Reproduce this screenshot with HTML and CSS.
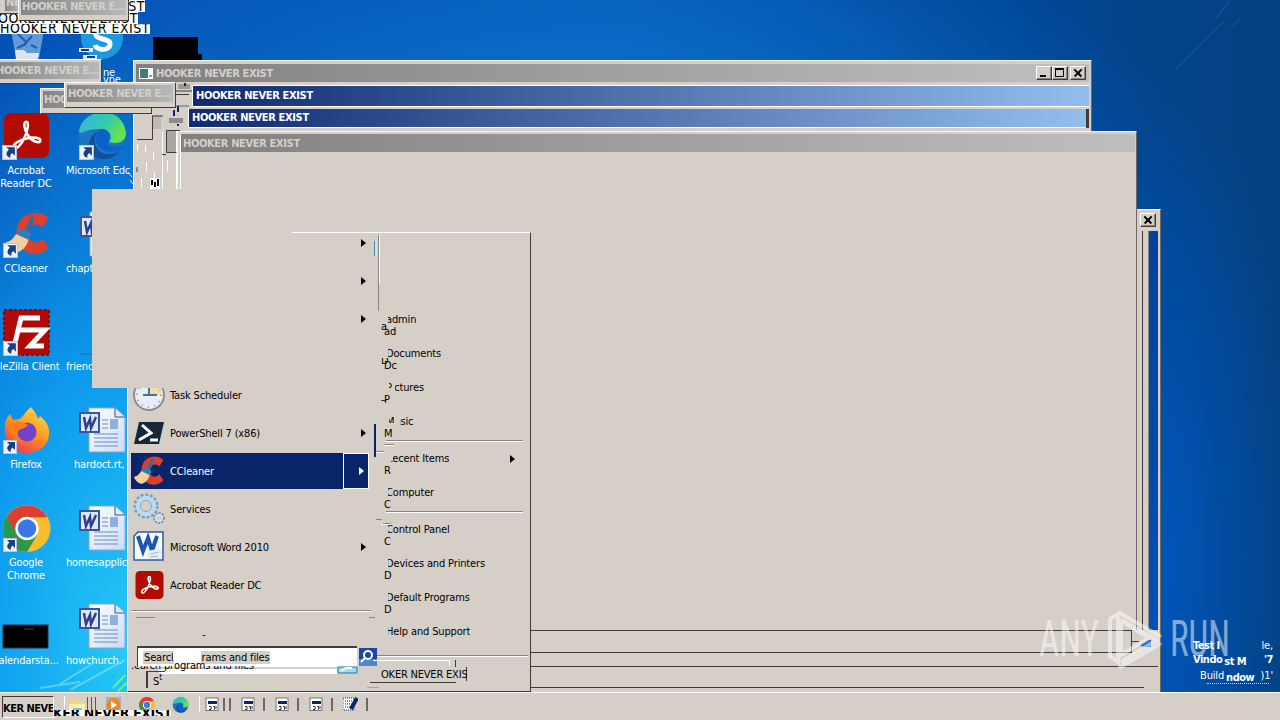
FILE: index.html
```html
<!DOCTYPE html>
<html lang="en">
<head>
  <meta charset="UTF-8">
  <title>Desktop</title>
  <link rel="stylesheet" href="styles.css">
</head>
<body>
<svg class="defs" width="0" height="0">
  <defs>
    <linearGradient id="edge1" x1="0" y1="0" x2="1" y2="0.4"><stop offset="0" stop-color="#35b6dc"/><stop offset="0.6" stop-color="#33c9b0"/><stop offset="1" stop-color="#66e152"/></linearGradient>
    <linearGradient id="fox" x1="0.8" y1="0" x2="0.2" y2="1"><stop offset="0" stop-color="#ffe043"/><stop offset="0.5" stop-color="#ff9120"/><stop offset="1" stop-color="#f0305c"/></linearGradient>
    <linearGradient id="page" x1="0" y1="0" x2="1" y2="1"><stop offset="0" stop-color="#fff"/><stop offset="1" stop-color="#c9dcf8"/></linearGradient>
  </defs>
  <symbol id="shortcut" viewBox="0 0 14 14">
    <rect x="0.5" y="0.5" width="13" height="13" fill="#eef3fa" stroke="#b8c4d8"/>
    <path d="M4 2h8v8L9.500 7.500C7.500 9 7.500 10.500 8 12 3.500 11 3 7 6.500 4.500z" fill="#173f85"/>
  </symbol>
  <symbol id="acrobat" viewBox="0 0 46 46">
    <rect width="46" height="46" rx="7" fill="#b30b00"/>
    <path d="M23 9c-4 0-2 8 1 13 4 7 11 9 13 7 2-4-8-5-14-3-7 2-14 5-13 9 2 4 8-3 11-10 3-6 5-16 2-16z" fill="none" stroke="#fff" stroke-width="2.600"/>
  </symbol>
  <symbol id="ccleaner" viewBox="0 0 46 46">
    <path d="M45 6C34-4 15 1 12 17c-3 14 5 26 17 27 8 0 13-3 16-7l-6-9c-5 6-14 5-15-4-2-9 8-15 15-8z" fill="#d9412d"/>
    <path d="M27 4l3 1-4 15-5-2z" fill="#2b6cb0"/>
    <path d="M14 19c5-3 12 0 13 6l-4 5-12-7z" fill="#2f7fb5"/>
    <path d="M11 23l13 6c-2 8-7 12-13 14C5 41 1 37 0 32c5-1 8-4 11-9z" fill="#f2cf9c"/>
  </symbol>
  <symbol id="chrome" viewBox="0 0 46 46">
    <circle cx="23" cy="23" r="23" fill="#f9bd2b"/>
    <path d="M3 12A23 23 0 0 1 43 12H23L13 29z" fill="#dc3e31"/>
    <path d="M3 11.500A23 23 0 0 0 23 46L33 29 13 28z" fill="#2f9648"/>
    <circle cx="23" cy="23" r="11.500" fill="#fff"/><circle cx="23" cy="23" r="9" fill="#3b78e7"/>
  </symbol>
  <symbol id="edge" viewBox="0 0 48 48">
    <circle cx="24" cy="24" r="23.500" fill="#1b74c4"/>
    <path d="M1 20C4-5 45-8 48 21c0 8-7 12-17 9 4-5 1-13-8-13C11 16 3 22 1 20z" fill="url(#edge1)"/>
    <path d="M19 20c-6 10 1 23 12 22 5 0 9-1 12-5-5 9-15 12-24 9C8 42 9 24 19 20z" fill="#154f98"/>
    <path d="M24 17c-8 2-9 14 0 20 6 4 14 3 19 0 3-2 1-4-2-3-8 2-13-1-11-4 4-6 0-13-6-13z" fill="#0a62c8"/>
  </symbol>
  <symbol id="firefox" viewBox="0 0 46 46">
    <path d="M1 24C0 17 2 11 6 7l3 6 7-1C21 7 23 3 27 0c3 4 5 6 7 12l2-3c6 5 10 11 9 19-1 11-11 18-22 18S2 38 1 24z" fill="url(#fox)"/>
    <circle cx="23" cy="25" r="9.500" fill="#7541c8"/>
    <path d="M6 17c6-3 12-3 18 1-3 4-7 3-10 6-3 6 2 10 8 10-12 3-18-6-16-17z" fill="#ff7c1d"/>
  </symbol>
  <symbol id="wordfile" viewBox="0 0 48 46">
    <path d="M10 1h26l10 9v35H10z" fill="url(#page)" stroke="#8fa5d0"/>
    <path d="M36 1v9h10" fill="#dfe9fb" stroke="#38558f"/>
    <rect x="31" y="12" width="8" height="10" fill="#8fb0dd"/>
    <path d="M23 13h6M23 17h6M23 21h6M15 27h24M15 31h24M15 35h24M15 39h24" stroke="#7487b8"/>
    <rect x="1" y="6" width="19" height="19" fill="#dfe7fa" stroke="#3755a8" stroke-width="2"/>
    <path d="M5 10l2 11 4-9 1 9 5-11" fill="none" stroke="#2d3f8f" stroke-width="2.500"/>
  </symbol>
  <symbol id="arrow" viewBox="0 0 5 8"><path d="M0 0l5 4-5 4z" fill="currentColor"/></symbol>
  <symbol id="app" viewBox="0 0 14 14">
    <rect x="1" y="1" width="12" height="12.500" fill="#fff" stroke="#777"/>
    <rect x="3" y="4" width="9" height="3" fill="#0a246a"/>
    <path d="M4 9.500h2v3H4M8 9.500h1.500v3M11 9v3" fill="none" stroke="#234"/>
  </symbol>
</svg>

<div class="desktop">
  <svg class="rays" width="1280" height="720" fill="none">
    <path d="M40 688l40-6M60 684l35-22M70 690l55-30" stroke="#7fe2fb" stroke-width="2" opacity=".6"/>
    <path d="M113 688l12-13M118 691l10-9" stroke="#6df08a" stroke-width="2"/>
    <path d="M1175 70l50-50M1216 18l14-17M1232 26l8-8" stroke="#4a86c0" opacity=".35"/>
  </svg>

  <div class="icons">
    <div class="icon">
      <svg width="48" height="48"><path d="M9 16h33l-5 28H14z" fill="#7fb4e4" opacity=".75"/><path d="M16 20l8 8M30 22l-8 9M15 34l9-4M29 31l6 3" stroke="#1b5eb0" stroke-width="2"/><path d="M13 36h9l3 3h12l-1 6H14z" fill="#d9e4ec"/></svg>
    </div>
    <div class="icon">
      <svg width="48" height="48"><use href="#acrobat" x="2" y="1" width="45" height="45"/><use href="#shortcut" x="0" y="33" width="15" height="15"/></svg>
      <span>Acrobat<br>Reader DC</span>
    </div>
    <div class="icon">
      <svg width="48" height="48"><use href="#ccleaner" x="3" y="2" width="45" height="44"/><use href="#shortcut" x="1" y="33" width="15" height="15"/></svg>
      <span>CCleaner</span>
    </div>
    <div class="icon">
      <svg width="48" height="48"><rect x="2" y="2" width="45" height="45" fill="#b30808" stroke="#7d0d0d" stroke-width="2" stroke-dasharray="3 2"/><path d="M13 35l6-25h19M17 22h14M25 22h18L28 38h14" fill="none" stroke="#fff" stroke-width="5"/><use href="#shortcut" x="1" y="33" width="15" height="15"/></svg>
      <span>FileZilla Client</span>
    </div>
    <div class="icon">
      <svg width="48" height="48"><use href="#firefox" x="2" y="1" width="46" height="46"/><use href="#shortcut" x="1" y="34" width="14" height="14"/></svg>
      <span>Firefox</span>
    </div>
    <div class="icon">
      <svg width="48" height="48"><use href="#chrome" x="1" y="1" width="48" height="47"/><use href="#shortcut" x="1" y="34" width="14" height="14"/></svg>
      <span>Google<br>Chrome</span>
    </div>
    <div class="icon">
      <svg width="48" height="48"><rect x="1" y="23" width="45" height="23" fill="#000" stroke="#234"/><path d="M22 27h10" stroke="#444"/></svg>
      <span>calendarsta...</span>
    </div>
    <div class="icon">
      <svg width="48" height="48"><circle cx="24" cy="24" r="21" fill="#1a9be0"/><path d="M31 18c-4-5-14-3-13 3 1 5 14 3 14 9 0 7-13 7-15 1" fill="none" stroke="#fff" stroke-width="5"/></svg>
    </div>
    <div class="icon left">
      <svg width="48" height="48"><use href="#edge" x="0" y="0" width="48" height="48"/><use href="#shortcut" x="1" y="33" width="15" height="15"/></svg>
      <span>Microsoft Edc</span>
    </div>
    <div class="icon left">
      <svg width="48" height="48"><use href="#wordfile" x="2" y="1" width="48" height="46"/></svg>
      <span>chapt</span>
    </div>
    <div class="icon left">
      <svg width="48" height="48"><path d="M2 46h20" stroke="#266b9c"/></svg>
      <span>friend</span>
    </div>
    <div class="icon left">
      <svg width="48" height="48"><use href="#wordfile" x="1" y="1" width="48" height="46"/></svg>
      <span class="short">hardoct.rt,</span>
    </div>
    <div class="icon left">
      <svg width="48" height="48"><use href="#wordfile" x="1" y="1" width="48" height="46"/></svg>
      <span>homesapplic</span>
    </div>
    <div class="icon left">
      <svg width="48" height="48"><use href="#wordfile" x="1" y="1" width="48" height="46"/></svg>
      <span>howchurch.</span>
    </div>
  </div>

  <div class="build">
    <p><b>Test I</b><span class="end">le,</span></p>
    <p><b>Vindo</b><b class="drop">st M</b><b class="end">'7</b></p>
    <p><span>Build</span><b class="drop">ndow</b><span class="end">)1'</span></p>
    <div class="dots"></div>
  </div>

  <div class="window back">
    <div class="tools"><button class="btn close"></button></div>
    <div class="gap"></div>
  </div>

  <div class="window main">
    <div class="titlebar">
      <svg width="14" height="11"><rect width="14" height="11" fill="#fff"/><rect x="1" y="1" width="8" height="9" fill="#3f7d78"/><path d="M10 8h3" stroke="#333"/></svg>
      <span>HOOKER NEVER EXIST</span>
      <button class="btn min"></button><button class="btn max"></button><button class="btn close"></button>
    </div>
    <div class="active first">HOOKER NEVER EXIST</div>
    <div class="active second">HOOKER NEVER EXIST</div>
  </div>

  <div class="window front">
    <div class="titlebar">HOOKER NEVER EXIST</div>
  </div>
  <div class="lower">
    <div class="tray"></div>
    <div class="tray two"></div>
    <div class="tray three"></div>
    <svg class="corner" width="28" height="20"><path d="M0 9.500h8" stroke="#413c38"/><path d="M9 13l8-5h3v7h-8z" fill="#1d6cc8"/></svg>
  </div>

  <svg class="debris" width="1280" height="240">
    <path d="M153 37h45v17h4v6h-49z" fill="#000"/>
    <path d="M134 85h57v22h-3v24h-11v58h-43z" fill="#d5cfc8"/>
    <path d="M133.500 85v104M162.500 132v57M176.500 131v58M180.500 134v55M192.500 86v21" stroke="#fff"/>
    <path d="M167 131h9v21h-9z" fill="#aaa7a3"/>
    <path d="M153 115h8v14h-8z" fill="#bdbab5"/>
    <path d="M137 139.500h15.500v-24M180 130.500h-13.500v22h10M162 154.500h4M153 116h10M176 91h16M176 94.500h13" fill="none" stroke="#413c38"/>
    <path d="M178 84h12v5h-12zM172 105h17v2h-17z" fill="#9c9a97"/>
    <path d="M185 83v3" stroke="#222" stroke-width="2"/>
    <path d="M169 118h14v5h-14z" fill="#8d8c8c"/>
    <path d="M174 110v6M178 106v6M178 124v2" stroke="#0a246a" stroke-width="2"/>
    <path d="M145.500 145v7M153.500 152v8M146.500 162v9M167.500 160v12M141.500 178v9M154.500 172v6M137.500 144v7" stroke="#fff"/>
    <path d="M137 167v5" stroke="#4b453f"/>
    <path d="M150 178h10v11h-10z" fill="#fff"/>
    <path d="M152 180v5M155 182v5M158 179v7" stroke="#000" stroke-width="2"/>
    <path d="M128 172l4 5M130 180l3 4" stroke="#cceaff"/>
  </svg>

  <div class="trail">
    <div class="line one">HOOKER NEVER EXIST</div>
    <div class="line two">HOOKER NEVER EXIST</div>
    <div class="line three">HOOKER NEVER EXIST</div>
  </div>
  <div class="skype">ne<br>vne</div>
  <svg class="skypelink" width="20" height="14"><path d="M0 1h14v4H0zM4 8h14v6H4z" fill="#e4eefa"/><path d="M2 3h8M8 10h8" stroke="#123c80" stroke-width="2"/></svg>
  <div class="caption c1"><span>NE</span></div>
  <div class="caption c2"><span>HOOKER NEVER E...</span></div>
  <div class="caption c3"><span>HOOKER NEVER E...</span></div>
  <div class="caption c4"><span>HOO</span></div>
  <div class="caption c6"><span>HOOKER NEVER E...</span></div>

  <div class="startmenu">
    <div class="programs">
      <div class="row top"><svg class="more"><use href="#arrow"/></svg></div>
      <div class="row"><svg class="more"><use href="#arrow"/></svg></div>
      <div class="row"><svg class="more"><use href="#arrow"/></svg></div>
      <div class="row"></div>
      <div class="row">
        <svg width="32" height="32"><circle cx="16" cy="16" r="15" fill="#e8eef4" stroke="#8c8c92" stroke-width="2"/><path d="M16 16V3a13 13 0 0 1 13 13z" fill="#f3dfa0"/><path d="M16 6v10M10 16h14" stroke="#4a6ea0" stroke-width="2"/><circle cx="16" cy="16" r="12" fill="none" stroke="#8a93a5" stroke-width="2" stroke-dasharray="1 5.300"/></svg>
        <span>Task Scheduler</span>
      </div>
      <div class="row">
        <svg width="32" height="32"><path d="M6 5h25l-5 22H1z" fill="#16263b"/><path d="M9 8l9 8-12 7M17 23h8" fill="none" stroke="#fff" stroke-width="3"/></svg>
        <span>PowerShell 7 (x86)</span><svg class="more"><use href="#arrow"/></svg>
      </div>
      <div class="row selected">
        <svg width="32" height="32"><use href="#ccleaner" x="0" y="1" width="32" height="30"/></svg>
        <span>CCleaner</span><div class="split"><svg class="more"><use href="#arrow"/></svg></div>
      </div>
      <div class="row">
        <svg width="32" height="32"><circle cx="13" cy="13" r="10" fill="none" stroke="#6f9cc0" stroke-width="5" stroke-dasharray="2.500 1.700"/><circle cx="13" cy="13" r="8" fill="none" stroke="#bcd9ee" stroke-width="4.500"/><circle cx="13" cy="13" r="5.500" fill="none" stroke="#7fa9c8"/><circle cx="26" cy="25" r="4" fill="none" stroke="#7797ae" stroke-width="4" stroke-dasharray="1.600 1"/><circle cx="26" cy="25" r="3" fill="none" stroke="#d3e2ec" stroke-width="2"/></svg>
        <span>Services</span>
      </div>
      <div class="row">
        <svg width="32" height="32"><path d="M5 1h25v28H1V5z" fill="#f6faff" stroke="#2d5ca5" stroke-width="1.500"/><path d="M5 5l5 15 5-13 4 13 5-15" fill="none" stroke="#1c56b0" stroke-width="4"/><path d="M14 20l15-3v11H14z" fill="#e7eef9"/><path d="M17 23l9-2M17 26l8-1" stroke="#9fb7dc"/></svg>
        <span>Microsoft Word 2010</span><svg class="more"><use href="#arrow"/></svg>
      </div>
      <div class="row">
        <svg width="32" height="32"><use href="#acrobat" x="2" y="2" width="29" height="28"/></svg>
        <span>Acrobat Reader DC</span>
      </div>
      <div class="rule"></div>
      <div class="all">-</div>
      <div class="search"><span>Searcl</span><span class="tail">rams and files</span></div>
    </div>
    <div class="places">
      <div class="place"><span class="chip">admin</span><i>a<br>&nbsp;ad</i></div>
      <div class="place"><span class="chip">Documents</span><i>D<br>&nbsp;Dc</i></div>
      <div class="place"><span class="chip pic">Pictures</span><i>_<br>&nbsp;P</i></div>
      <div class="place"><span class="chip mus">Music</span><i><br>&nbsp;M</i></div>
      <div class="sep"></div>
      <div class="place"><span class="chip rec">Recent Items</span><i><br>&nbsp;R</i><svg class="more"><use href="#arrow"/></svg></div>
      <div class="place"><span class="chip">Computer</span><i><br>&nbsp;C</i></div>
      <div class="sep"></div>
      <div class="place"><span class="chip">Control Panel</span><i><br>&nbsp;C</i></div>
      <div class="place"><span class="chip">Devices and Printers</span><i><br>&nbsp;D</i></div>
      <div class="place"><span class="chip">Default Programs</span><i><br>&nbsp;D</i></div>
      <div class="place"><span class="chip">Help and Support</span></div>
    </div>
  </div>

  <svg class="scraps" width="420" height="480">
    <path d="M251.500 4v76" stroke="#8a8580"/><path d="M252.500 4v48" stroke="#fff"/>
    <path d="M247.500 10v15" stroke="#4a7fa8"/><path d="M249 10v15" stroke="#cbe6f3" stroke-width="2"/>
    <path d="M248 193v33" stroke="#0a246a" stroke-width="2"/>
    <path d="M249 220.500h8M257 213.500h10M249 288.500h6M256 292.500h8M248 386.500h-6M9 386.500h19" stroke="#8a8580"/>
    <path d="M249 221.500h8M257 214.500h10M254 293.500h10" stroke="#fff"/>
    <path d="M232 417h18v18h-18z" fill="#1b46a8"/><path d="M232 428h18v7h-18z" fill="#4e83cf"/>
    <circle cx="241" cy="424" r="4" fill="none" stroke="#fff" stroke-width="2"/><path d="M238 427l-4 4" stroke="#fff" stroke-width="2"/>
    <path d="M211 436h19v6h-19z" fill="#9edcf0" stroke="#207ba8"/><path d="M214 440l5-3h6" stroke="#fff" stroke-width="2" fill="none"/>
    <path d="M46 421h28v8H46zM32 438h178v5H32z" fill="#fff"/>
    <path d="M250 424.500h151" stroke="#8a8580"/><path d="M250 425.500h151M246 429.500h76M322.500 429v6" stroke="#fff"/><path d="M328.500 429v7M243 451.500h86M339.500 436v14" stroke="#413c38"/>
    <path d="M240 456.500h12" stroke="#45c9ee"/>
  </svg>
  <div class="ghost"><span class="cut">.earch pr</span><span>ogram</span><span class="cut">s and files</span></div>
  <div class="ghostbox">S<sup>t</sup></div>
  <div class="scraptext">OKER NEVER EXIS</div>
  <div class="block"></div>

  <svg class="watermark" width="200" height="64">
    <text x="3" y="48" textLength="60" lengthAdjust="spacingAndGlyphs">ANY</text>
    <text x="134" y="48" textLength="60" lengthAdjust="spacingAndGlyphs">RUN</text>
    <path d="M74 11l8-5v48l-8-6zM82 4l43 25M85 12l36 20-36 22M83 60l42-25M85 13v34l28-17-28-18" fill="none" stroke="#fff" stroke-width="4"/>
  </svg>

  <div class="taskbar">
    <div class="task">KER NEVE</div>
    <div class="grip"></div>
    <svg width="18" height="16" class="folder"><path d="M1 2h6l2 2h8v11H1z" fill="#f2d77a"/><path d="M1 7h16v8H1z" fill="#fbeeb0"/><path d="M5 11h9v4H5z" fill="#7fc1e6"/></svg>
    <div class="bars"></div>
    <svg width="18" height="16" class="wmp"><rect x="1" y="0" width="15" height="16" fill="#89b9de"/><circle cx="8.500" cy="8" r="7" fill="#f08a1d"/><path d="M6 4l6 4-6 4z" fill="#fff"/></svg>
    <svg width="16" height="16" class="ch"><use href="#chrome"/></svg>
    <svg width="17" height="16" class="ed"><use href="#edge"/></svg>
    <div class="slot s0"><svg width="14" height="14"><use href="#app"/></svg><b></b><b></b></div>
    <div class="slot"><svg width="14" height="14"><use href="#app"/></svg><b></b></div>
    <div class="slot"><svg width="14" height="14"><use href="#app"/></svg><b></b></div>
    <div class="slot"><svg width="14" height="14"><use href="#app"/></svg><b></b></div>
    <div class="slot"><svg width="15" height="14"><rect x="0" y="1" width="11" height="12" fill="#fff" stroke="#0a246a" stroke-dasharray="1 1"/><path d="M2 4h8M2 7h7M2 10h5" stroke="#0a246a" stroke-dasharray="1 1"/><path d="M14 1L8 12" stroke="#0a246a" stroke-width="4"/></svg><b></b></div>
    <div class="under"><span>KER NEVER EXIST</span></div>
  </div>
</div>
</body>
</html>
```

FILE: styles.css
```css
body {
  margin: 0;
  font-family: "DejaVu Sans Condensed", "DejaVu Sans", sans-serif;
  font-stretch: condensed;
  font-size: 11px;
  letter-spacing: -0.15px;
  color: #000;
}

.defs {
  position: absolute;
}

.desktop {
  position: relative;
  width: 1280px;
  height: 720px;
  overflow: hidden;
  background:
    radial-gradient(ellipse 330px 620px at 130px 650px, #25caf7 0%, rgba(14, 160, 242, 0.9) 48%, rgba(0, 90, 200, 0) 100%),
    radial-gradient(ellipse 600px 200px at 560px 110px, #0a72cc 0%, rgba(0, 90, 190, 0) 100%),
    radial-gradient(ellipse 150px 500px at 1150px 560px, #0057bd 0%, rgba(0, 80, 180, 0) 100%),
    linear-gradient(90deg, #0450b4 0%, #0757b4 50%, #00479a 75%, #04407f 100%);
}

.rays,
.debris {
  position: absolute;
  left: 0;
  top: 0;
}

.icons {
  display: grid;
  grid-template-rows: repeat(7, 98px);
  grid-auto-flow: column;
  grid-auto-columns: 76px;
  width: 152px;
  padding-top: 14px;
  margin-left: -12px;
}

.icon {
  display: flex;
  flex-direction: column;
  align-items: center;
  color: #fff;
}

.icon svg {
  flex: none;
  overflow: visible;
}

.icon span {
  margin-top: 4px;
  line-height: 13px;
  text-align: center;
  white-space: nowrap;
}

.icon.left span {
  align-self: flex-start;
  padding-left: 2px;
}

.icon.left span.short {
  padding-left: 10px;
}

.build {
  position: absolute;
  left: 1193px;
  top: 639px;
  width: 80px;
  color: #fff;
}

.build p {
  display: flex;
  margin: 0;
  height: 14px;
  line-height: 14px;
}

.build .end {
  margin-left: auto;
}

.build b {
  letter-spacing: -0.5px;
}

.build p:nth-child(3) {
  padding-left: 7px;
  margin-top: 2px;
}

.build .drop {
  padding: 2px 0 0 2px;
}

.dots {
  width: 62px;
  margin: 0 0 0 14px;
  border-top: 1px dotted #a9dcff;
}

.window {
  position: absolute;
  box-sizing: border-box;
  background: #d5cfc8;
  border: 1px solid #f7f5f2;
  border-right-color: #6d6862;
}

.back {
  left: 1100px;
  top: 209px;
  width: 61px;
  height: 484px;
  display: flex;
  flex-direction: column;
}

.back .tools {
  display: flex;
  justify-content: flex-end;
  padding: 3px 4px 4px 0;
}

.gap {
  flex: 1;
  width: 9px;
  align-self: flex-end;
  margin-right: 2px;
  background: linear-gradient(#00429a, #0054b8);
  border-left: 1px solid #8a8580;
  box-shadow: -5px 0 #d5cfc8, -6px 0 #413c38;
}

.main {
  left: 133px;
  top: 60px;
  width: 959px;
  height: 76px;
  padding: 3px 2px;
}

.titlebar {
  display: flex;
  align-items: center;
  box-sizing: border-box;
  height: 18px;
  padding: 0 3px;
  font-weight: bold;
  letter-spacing: -0.35px;
  color: #d5cfc8;
  background: linear-gradient(90deg, #808080, #c0c0c0);
}

.titlebar span {
  flex: 1;
  padding-left: 3px;
}

.btn {
  position: relative;
  box-sizing: border-box;
  width: 16px;
  height: 14px;
  padding: 0;
  background: #d5cfc8;
  border: 1px solid;
  border-color: #fff #413c38 #413c38 #fff;
  box-shadow: inset -1px -1px #8a8580;
}

.btn.close {
  margin-left: 2px;
}

.btn.min::before {
  content: "";
  position: absolute;
  left: 3px;
  bottom: 2px;
  width: 6px;
  height: 2px;
  background: #000;
}

.btn.max::before {
  content: "";
  position: absolute;
  left: 2px;
  top: 1px;
  width: 7px;
  height: 6px;
  border: 1px solid #000;
  border-top-width: 2px;
}

.btn.close::before,
.btn.close::after {
  content: "";
  position: absolute;
  left: 2px;
  top: 5px;
  width: 10px;
  height: 1.5px;
  background: #000;
  transform: rotate(45deg);
}

.btn.close::after {
  transform: rotate(-45deg);
}

.active {
  height: 20px;
  line-height: 20px;
  padding-left: 3px;
  color: #fff;
  font-weight: bold;
  letter-spacing: -0.35px;
  background: linear-gradient(90deg, #0f2a70, #94bdec);
  border-bottom: 1px solid #fff;
}

.active.first {
  margin: 3px 0 0 57px;
  border-top: 1px solid #fff;
}

.active.second {
  height: 18px;
  line-height: 18px;
  margin: 2px 3px 0 52px;
  border-left: 1px solid #fff;
  box-shadow: 3px 0 #413c38;
}

.front {
  left: 177px;
  top: 131px;
  width: 960px;
  height: 562px;
  border-bottom: 0;
  padding: 2px 1px 0 3px;
}

.front .titlebar {
  padding-left: 2px;
  background: linear-gradient(90deg, #808080, #bfbfbf);
}

.lower {
  position: absolute;
  left: 531px;
  top: 630px;
  width: 628px;
  height: 62px;
  background: #d5cfc8;
}

.tray {
  box-sizing: border-box;
  width: 601px;
  height: 23px;
  border: 1px solid #413c38;
  border-width: 1px 1px 1px 0;
}

.tray.two {
  width: 627px;
  height: 14px;
  border-width: 0 0 1px;
}

.tray.three {
  width: 613px;
  height: 21px;
  border-width: 0 0 1px;
}

.corner {
  position: absolute;
  left: 600px;
  top: 2px;
}

.trail {
  position: absolute;
  left: 0;
  top: 0;
  width: 151px;
  font-size: 14px;
  letter-spacing: 0.5px;
  overflow: hidden;
}

.trail .line {
  width: max-content;
  height: 12px;
  line-height: 12px;
  overflow: hidden;
  background: #fff;
  white-space: nowrap;
}

.trail .one {
  margin-left: -5px;
}

.trail .two {
  margin-left: -12px;
}

.trail .three {
  height: 10px;
  line-height: 8px;
}

.skype {
  position: absolute;
  left: 103px;
  top: 69px;
  line-height: 7px;
  color: #fff;
}

.skypelink {
  position: absolute;
  left: 79px;
  top: 47px;
}

.caption {
  position: absolute;
  box-sizing: border-box;
  display: flex;
  background: #d5cfc8;
  border: 1px solid;
  border-color: #fff #413c38 #413c38 #fff;
  padding: 2px;
  color: #d5cfc8;
  font-weight: bold;
  letter-spacing: -0.35px;
  overflow: hidden;
}

.caption span {
  flex: 1;
  height: 17px;
  line-height: 17px;
  padding-left: 1px;
  white-space: nowrap;
  background: linear-gradient(90deg, #848484, #b8b8b8);
}

.c1 { left: -4px; top: -9px; width: 26px; height: 23px; padding-left: 8px; }
.c2 { left: 18px; top: -5px; width: 111px; height: 26px; }
.c3 { left: -8px; top: 59px; width: 110px; height: 25px; }
.c4 { left: 40px; top: 88px; width: 112px; height: 26px; }
.c6 { left: 64px; top: 82px; width: 112px; height: 26px; }

.startmenu {
  position: absolute;
  left: 127px;
  top: 232px;
  box-sizing: border-box;
  width: 404px;
  height: 460px;
  display: flex;
  background: #d5cfc8;
  border: 1px solid;
  border-color: #fff #413c38 #413c38 #fff;
}

.programs {
  width: 244px;
  padding-left: 3px;
}

.row {
  display: flex;
  align-items: center;
  box-sizing: border-box;
  height: 38px;
  padding-left: 2px;
}

.row.top {
  height: 29px;
  align-items: flex-start;
  padding-top: 6px;
}

.row span {
  padding-left: 5px;
}

.more {
  width: 5px;
  height: 8px;
  margin-left: auto;
  margin-right: 15px;
}

.row > .more {
  margin-right: 9px;
}

.row.selected {
  height: 36px;
  margin: 1px 6px 1px 0;
  color: #fff;
  background: #0a246a;
}

.split {
  display: flex;
  align-items: center;
  box-sizing: border-box;
  width: 26px;
  height: 36px;
  margin-left: auto;
  border: 1px solid #fff;
}

.split .more {
  margin-right: 4px;
}

.rule {
  height: 0;
  margin: 6px 4px 0 0;
  border-top: 1px solid #8a8580;
  border-bottom: 1px solid #fff;
}

.all {
  height: 36px;
  line-height: 46px;
  padding-left: 71px;
}

.search {
  display: flex;
  align-items: center;
  box-sizing: border-box;
  width: 220px;
  height: 21px;
  margin: -2px 0 0 6px;
  padding-left: 5px;
  background: #fff;
  border: 2px solid #413c38;
  border-width: 2px 0 0 1px;
}

.search span {
  background: #d5cfc8;
  padding-left: 1px;
}

.search .tail {
  margin-left: 27px;
}

.places {
  flex: 1;
  padding-top: 70px;
  padding-left: 11px;
}

.place {
  position: relative;
  display: flex;
  align-items: center;
  height: 34px;
}

.place span {
  margin-top: -1px;
}

.place i {
  position: absolute;
  left: -5px;
  top: 21px;
  font-style: normal;
  line-height: 5px;
  height: 12px;
  width: 16px;
  overflow: hidden;
}

.chip {
  clip-path: inset(0 0 0 2px);
}

.chip.pic {
  clip-path: polygon(3px 0, 6px 0, 6px 8px, 9px 8px, 9px 0, 100% 0, 100% 100%, 9px 100%, 9px 8px, 3px 8px);
}

.chip.mus {
  clip-path: polygon(3px 0, 8px 0, 8px 8px, 14px 8px, 14px 0, 100% 0, 100% 100%, 14px 100%, 14px 8px, 3px 8px);
}

.chip.rec {
  clip-path: polygon(3px 9px, 7px 9px, 7px 0, 100% 0, 100% 100%, 3px 100%);
}

.sep {
  height: 0;
  margin: 1px 7px 0 0;
  border-top: 1px solid #8a8580;
  border-bottom: 1px solid #fff;
}

.ghost {
  position: absolute;
  left: 131px;
  top: 659px;
  display: flex;
  align-items: flex-end;
  height: 13px;
  line-height: 13px;
}

.ghost .cut {
  clip-path: inset(7px 0 0 0);
}

.ghostbox {
  position: absolute;
  left: 146px;
  top: 671px;
  width: 12px;
  height: 16px;
  padding-left: 5px;
  line-height: 20px;
  border-left: 2px solid #413c38;
  border-top: 1px solid #413c38;
}

.ghostbox sup {
  font-size: 8px;
  line-height: 0;
}

.scraps {
  position: absolute;
  left: 127px;
  top: 231px;
}

.scraptext {
  position: absolute;
  left: 381px;
  top: 668px;
  width: 86px;
  line-height: 13px;
  letter-spacing: -0.2px;
  white-space: nowrap;
  overflow: hidden;
}

.block {
  position: absolute;
  left: 92px;
  top: 189px;
  width: 200px;
  height: 199px;
  background: #d5cfc8;
}

.watermark {
  position: absolute;
  left: 1036px;
  top: 608px;
  opacity: 0.5;
}

.watermark text {
  font-family: Roboto, sans-serif;
  font-weight: 400;
  font-size: 50px;
  letter-spacing: 0;
  fill: #fff;
}

.taskbar {
  position: absolute;
  left: 0;
  top: 692px;
  box-sizing: border-box;
  width: 1280px;
  height: 28px;
  display: flex;
  align-items: flex-start;
  padding: 3px 0 0 2px;
  background: #d5cfc8;
  border-top: 1px solid #fff;
}

.taskbar > svg {
  margin-top: 1px;
}

.task {
  box-sizing: border-box;
  width: 52px;
  height: 22px;
  line-height: 23px;
  font-weight: bold;
  letter-spacing: -0.5px;
  white-space: nowrap;
  overflow: hidden;
  border: 1px solid;
  border-color: #413c38 #fff #fff #413c38;
}

.grip {
  width: 1px;
  height: 13px;
  margin-left: 10px;
  background: #fff;
}

.folder { margin-left: 3px; }

.bars {
  width: 9px;
  height: 13px;
  margin: 1px 9px 0 1px;
  background: repeating-linear-gradient(90deg, #5c5752 0 1px, #d5cfc8 1px 4px);
}

.ch { margin-left: 16px; }
.ed { margin: 0 10px 0 17px; }

.slot {
  display: flex;
  align-items: center;
  width: 34px;
  height: 16px;
}

.slot b {
  width: 2px;
  height: 13px;
  margin-left: 8px;
  background: #6d6862;
}

.slot.s0 {
  width: 36px;
  padding-left: 5px;
  border-left: 1px solid #fff;
}

.slot.s0 b {
  margin-left: 4px;
}

.under {
  position: absolute;
  left: 53px;
  top: 17px;
  width: 118px;
  height: 6px;
  overflow: hidden;
  font-size: 14px;
  letter-spacing: -0.4px;
  line-height: 7px;
  font-weight: bold;
  white-space: nowrap;
}

.under span {
  background: #fff;
}
```
